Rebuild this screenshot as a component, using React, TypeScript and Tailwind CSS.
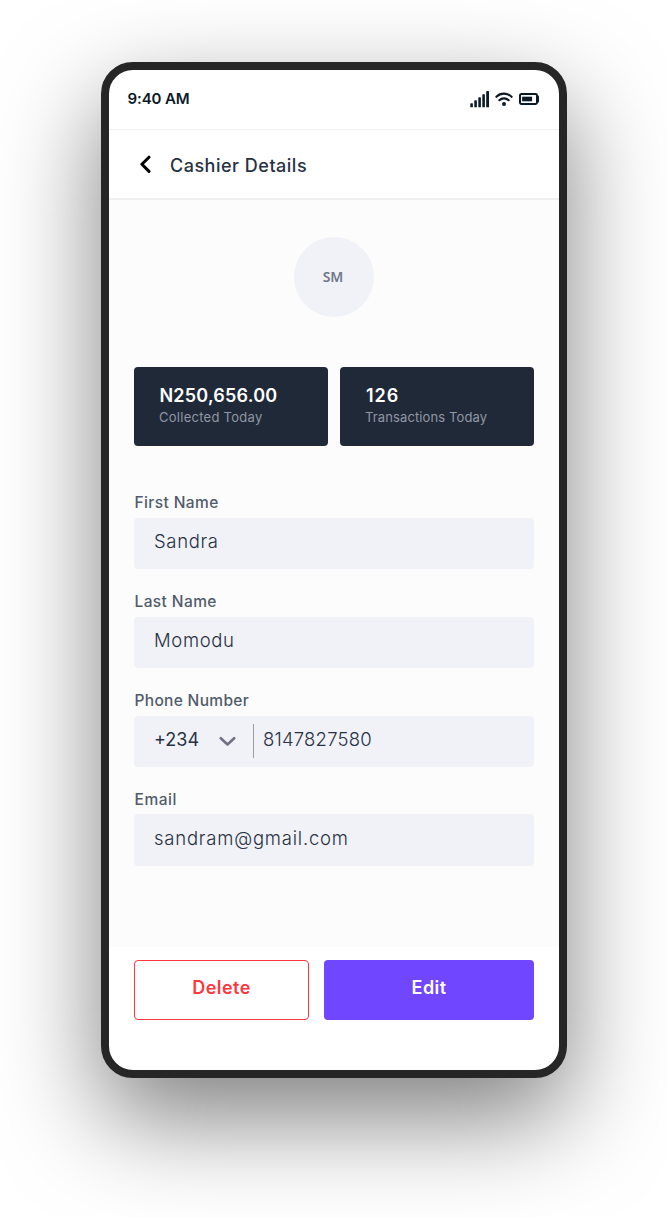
import type { ReactNode } from "react";

function StatusIcons() {
  return (
    <div className="flex items-center text-[#0b1a26]">
      <svg width="20" height="17" viewBox="0 0 20 17" fill="currentColor">
        <rect x="0.3" y="12.3" width="2.6" height="4" rx="0.6" />
        <rect x="4.3" y="9.3" width="2.6" height="7" rx="0.6" />
        <rect x="8.3" y="6.3" width="2.6" height="10" rx="0.6" />
        <rect x="12.3" y="3.3" width="2.6" height="13" rx="0.6" />
        <rect x="16.2" y="0.1" width="2.8" height="16.2" rx="0.6" />
      </svg>
      <svg className="ml-[5px]" width="18" height="15" viewBox="0 0 18 15" fill="none" stroke="currentColor" strokeWidth="2.2" strokeLinecap="round">
        <path d="M1.4 4.8C5.5 0.6 12.5 0.6 16.6 4.8" />
        <path d="M4.4 8.2C6.9 5.7 11.1 5.7 13.6 8.2" />
        <circle cx="9" cy="12" r="2" fill="currentColor" stroke="none" />
      </svg>
      <svg className="ml-[6px]" width="20" height="12" viewBox="0 0 20 12" fill="none">
        <rect x="1" y="1" width="17" height="10" rx="1.4" stroke="currentColor" strokeWidth="2" />
        <rect x="3.1" y="3.7" width="10" height="4.6" fill="currentColor" />
        <path d="M18.2 2.6h0.9a0.9 0.9 0 0 1 0.9 0.9v5a0.9 0.9 0 0 1-0.9 0.9h-0.9z" fill="currentColor" />
      </svg>
    </div>
  );
}

function StatCard({ value, label, valueClass, labelClass }: { value: string; label: string; valueClass: string; labelClass: string }) {
  return (
    <div className="h-[78.5px] flex-1 rounded-[4px] bg-[#202938] pl-[25px] pt-[18px]">
      <div className={`whitespace-nowrap text-[18px] font-semibold leading-[22px] text-white ${valueClass}`}>{value}</div>
      <div className={`mt-px whitespace-nowrap text-[13px] leading-[18px] text-[#9097a4] ${labelClass}`}>{label}</div>
    </div>
  );
}

function Field({ label, labelClass, children }: { label: string; labelClass: string; children: ReactNode }) {
  return (
    <div>
      <div className={`h-5 pl-[0.5px] pt-[0.3px] text-[15.5px] font-medium leading-5 text-[#515b6b] ${labelClass}`}>{label}</div>
      <div className="mt-[5px] flex h-[51.4px] items-center rounded-[4px] bg-[#f1f2f8] pl-5 pb-[3px] text-[18.5px] font-light text-[#273142]">
        {children}
      </div>
    </div>
  );
}

export default function App() {
  return (
    <div className="h-[1217px] w-[667px] overflow-hidden bg-white pl-[101px] pt-[61.5px] font-['Inter','Liberation_Sans',sans-serif]">
      <div className="flex h-[1016px] w-[466px] flex-col overflow-hidden rounded-[32px] border-8 border-[#262626] bg-white shadow-[0_40px_100px_rgba(0,0,0,0.5)]">
        <div className="flex h-[60px] shrink-0 items-center justify-between border-b border-[#f1f1f3] pl-[18.5px] pr-5">
          <span className="text-[15px] font-semibold tracking-[-0.1px] text-[#0b1a26]">9:40 AM</span>
          <StatusIcons />
        </div>
        <div className="flex h-[70px] shrink-0 items-center border-b-2 border-[#efeff2] pl-[30px]">
          <svg width="13" height="18" viewBox="0 0 13 18" fill="none" stroke="#000" strokeWidth="3" strokeLinecap="round" strokeLinejoin="round">
            <path d="M10 2.2L2.9 9.3L10 16.4" />
          </svg>
          <h1 className="ml-[18px] pt-[4px] text-[18px] font-medium tracking-[0.5px] text-[#273142]">Cashier Details</h1>
        </div>
        <div className="flex h-[747.5px] shrink-0 flex-col bg-[#fcfcfc] px-[25px] pt-[37.5px]">
          <div className="flex size-20 shrink-0 items-center justify-center self-center rounded-full bg-[#f1f2f8] pb-[2px] pr-[2px] font-['Noto_Sans',sans-serif] text-[14px] font-semibold text-[#6f7889]">
            SM
          </div>
          <div className="mt-[50px] flex gap-3">
            <StatCard value="N250,656.00" label="Collected Today" valueClass="pl-[0.5px] tracking-[0.2px]" labelClass="tracking-[0.27px]" />
            <StatCard value="126" label="Transactions Today" valueClass="pl-px tracking-[1px]" labelClass="tracking-[0.12px]" />
          </div>
          <div className="mt-[47.5px] flex flex-col gap-[22.4px]">
            <Field label="First Name" labelClass="tracking-[0.4px]">
              <span className="tracking-[0.65px]">Sandra</span>
            </Field>
            <Field label="Last Name" labelClass="tracking-[0.4px]">
              <span className="tracking-[0.65px]">Momodu</span>
            </Field>
            <Field label="Phone Number" labelClass="tracking-[0.32px]">
              <span className="w-[45px] whitespace-nowrap text-[18px] font-normal">+234</span>
              <svg className="ml-5 mt-[3px]" width="17" height="11" viewBox="0 0 17 11" fill="none" stroke="#6f7285" strokeWidth="2.6" strokeLinecap="round" strokeLinejoin="round">
                <path d="M1.8 2.2L8.5 8.5L15.2 2.2" />
              </svg>
              <span className="ml-[17px] mt-[3px] h-[34px] w-px bg-[#999da8]" />
              <span className="ml-[9px] tracking-[0.2px]">8147827580</span>
            </Field>
            <Field label="Email" labelClass="tracking-[0.55px]">
              <span className="tracking-[0.78px]">sandram@gmail.com</span>
            </Field>
          </div>
        </div>
        <div className="flex gap-[15px] px-[25px] pt-[13px]">
          <button className="h-[60px] w-[175px] rounded-[4px] border border-[#ff3840] pb-[6px] text-[18px] font-semibold tracking-[0.45px] text-[#ff3840]">Delete</button>
          <button className="h-[60px] flex-1 rounded-[4px] bg-[#7047ff] pb-[6px] text-[18px] font-semibold tracking-[0.4px] text-white">Edit</button>
        </div>
      </div>
    </div>
  );
}
